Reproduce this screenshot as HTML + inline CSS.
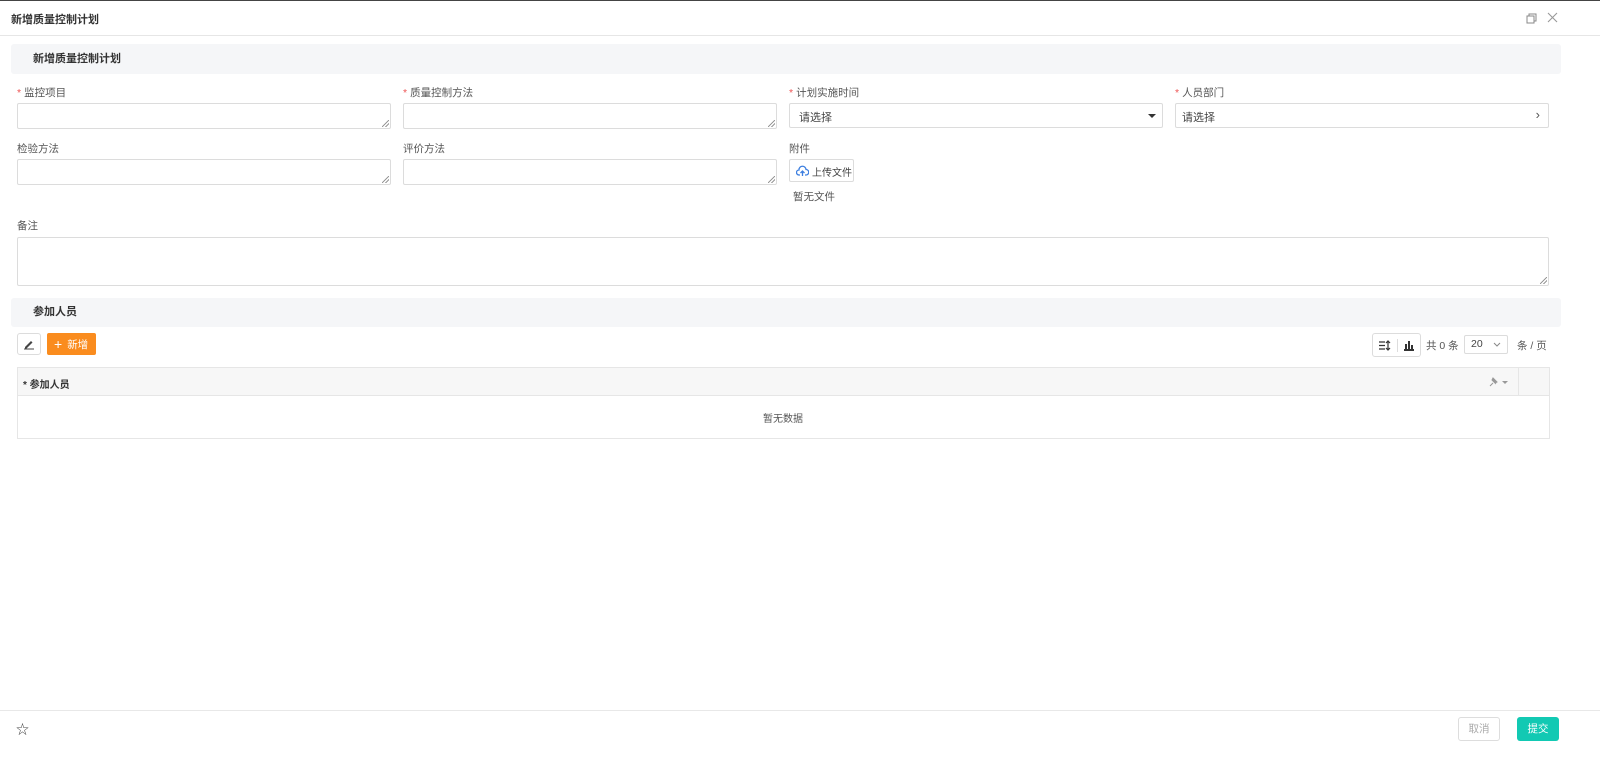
<!DOCTYPE html>
<html><head><meta charset="utf-8"><style>
*{box-sizing:border-box;margin:0;padding:0}
body{width:1600px;height:761px;background:#fff;font-family:"Liberation Sans","Noto Sans CJK SC",sans-serif;font-size:11px;color:#333;position:relative;overflow:hidden}
.a{position:absolute}
.bar{position:absolute;left:11px;width:1550px;background:#f5f6f8;border-radius:3px;font-weight:bold;font-size:11px;color:#333;padding-left:22px}
.lbl{position:absolute;font-size:10.5px;color:#555}
.lbl b{color:#e55;font-weight:normal;margin-right:3px}
.inp{position:absolute;border:1px solid #dcdcdc;border-radius:2px;background:#fff}
.rs{position:absolute;right:1px;bottom:1px;width:7px;height:7px;background:linear-gradient(135deg,transparent 45%,#999 45%,#999 55%,transparent 55%,transparent 70%,#999 70%,#999 80%,transparent 80%)}
</style></head><body>
<div class="a" style="left:0;top:0;width:1600px;height:1px;background:#444"></div>
<div class="a" style="left:11px;top:11px;font-size:11px;font-weight:bold;color:#333">新增质量控制计划</div>
<svg class="a" style="left:1526px;top:13px" width="11" height="11" viewBox="0 0 11 11"><rect x="1" y="3" width="7" height="7" fill="none" stroke="#888"/><path d="M3 3V1h7v7H8" fill="none" stroke="#888"/></svg>
<svg class="a" style="left:1547px;top:12px" width="11" height="11" viewBox="0 0 11 11"><path d="M1 1L10 10M10 1L1 10" stroke="#999" stroke-width="1.1"/></svg>
<div class="a" style="left:0;top:35px;width:1600px;height:1px;background:#e6e6e6"></div>
<div class="bar" style="top:44px;height:30px;line-height:30px">新增质量控制计划</div>

<div class="lbl" style="left:17px;top:85px"><b>*</b>监控项目</div>
<div class="inp" style="left:17px;top:103px;width:374px;height:26px"><div class="rs"></div></div>
<div class="lbl" style="left:403px;top:85px"><b>*</b>质量控制方法</div>
<div class="inp" style="left:403px;top:103px;width:374px;height:26px"><div class="rs"></div></div>
<div class="lbl" style="left:789px;top:85px"><b>*</b>计划实施时间</div>
<div class="inp" style="left:789px;top:103px;width:374px;height:25px;padding:5px 9px;color:#444">请选择<span class="a" style="right:6px;top:10px;border:4px solid transparent;border-top:4px solid #333;border-bottom:0"></span></div>
<div class="lbl" style="left:1175px;top:85px"><b>*</b>人员部门</div>
<div class="inp" style="left:1175px;top:103px;width:374px;height:25px;padding:5px 6px;color:#444">请选择<span class="a" style="right:8px;top:3px;font-size:13px;color:#555">›</span></div>

<div class="lbl" style="left:17px;top:141px">检验方法</div>
<div class="inp" style="left:17px;top:159px;width:374px;height:26px"><div class="rs"></div></div>
<div class="lbl" style="left:403px;top:141px">评价方法</div>
<div class="inp" style="left:403px;top:159px;width:374px;height:26px"><div class="rs"></div></div>
<div class="lbl" style="left:789px;top:141px">附件</div>
<div class="inp" style="left:789px;top:159px;width:65px;height:23px;padding:4px 0 0 22px;font-size:10px;color:#444">上传文件
<svg class="a" style="left:6px;top:5px" width="13" height="12" viewBox="0 0 13 12"><path d="M4 10H3A2.5 2.5 0 0 1 3 5 3.5 3.5 0 0 1 10 4.5 2.6 2.6 0 0 1 10 10H9" fill="none" stroke="#3d7fe0" stroke-width="1.3"/><path d="M6.5 11V6M4.5 8l2-2 2 2" fill="none" stroke="#3d7fe0" stroke-width="1.3"/></svg></div>
<div class="lbl" style="left:793px;top:189px;color:#555">暂无文件</div>

<div class="lbl" style="left:17px;top:218px">备注</div>
<div class="inp" style="left:17px;top:237px;width:1532px;height:49px"><div class="rs"></div></div>

<div class="bar" style="top:298px;height:29px;line-height:29px">参加人员</div>
<div class="inp" style="left:17px;top:333px;width:24px;height:22px;border-radius:3px"><svg class="a" style="left:5px;top:4px" width="12" height="12" viewBox="0 0 12 12"><path d="M2 9L8 3l1.5 1.5-6 6H2z" fill="#444"/><path d="M1 11h10" stroke="#444"/></svg></div>
<div class="a" style="left:47px;top:333px;width:49px;height:22px;background:#fa8c1e;border-radius:2px;color:#fff;font-size:10.5px;line-height:22px;padding-left:7px"><span style="font-size:14px;margin-right:5px;vertical-align:-1px">+</span>新增</div>

<div class="inp" style="left:1372px;top:333px;width:49px;height:24px;border-radius:3px">
<svg class="a" style="left:6px;top:6px" width="12" height="11" viewBox="0 0 12 11"><path d="M0 2h6M0 5.5h6M0 9h6M9 1v9M7 3l2-2 2 2M7 8l2 2 2-2" stroke="#333" fill="none" stroke-width="1.2"/></svg>
<div class="a" style="left:24px;top:5px;width:1px;height:13px;background:#ddd"></div>
<svg class="a" style="left:30px;top:5px" width="12" height="12" viewBox="0 0 12 12"><path d="M1 11h10M3 5v5M6 2v8M9 6v4" stroke="#333" stroke-width="2"/></svg></div>
<div class="a" style="left:1426px;top:338px;font-size:10.5px;color:#555">共 0 条</div>
<div class="inp" style="left:1464px;top:335px;width:44px;height:19px;padding:0 6px;line-height:17px;font-size:10.5px;color:#444">20<svg class="a" style="right:6px;top:6px" width="8" height="5" viewBox="0 0 8 5"><path d="M1 1l3 3 3-3" stroke="#888" fill="none"/></svg></div>
<div class="a" style="left:1517px;top:338px;font-size:10.5px;color:#555">条 / 页</div>

<div class="a" style="left:17px;top:367px;width:1533px;height:72px;border:1px solid #e6e6e6">
<div class="a" style="left:0;top:0;width:1531px;height:28px;background:#f7f7f7;border-bottom:1px solid #e6e6e6"></div>
<div class="a" style="left:1500px;top:0;width:1px;height:28px;background:#e6e6e6"></div>
<div class="a" style="left:5px;top:8px;font-size:10px;font-weight:bold;color:#333">* 参加人员</div>
<svg class="a" style="left:1470px;top:9px" width="22" height="10" viewBox="0 0 22 10"><path d="M2 9l3-3M4 3l4 4M5 1l4 4-2 1-3-3z" stroke="#999" fill="#999"/><path d="M14 4h6l-3 3z" fill="#999"/></svg>
<div class="a" style="left:745px;top:42px;font-size:10px;color:#555">暂无数据</div>
</div>

<div class="a" style="left:0;top:710px;width:1600px;height:1px;background:#e8e8e8"></div>
<div class="a" style="left:16px;top:719px;font-size:13px;color:#444">☆</div>
<div class="a" style="left:1458px;top:717px;width:42px;height:24px;border:1px solid #ddd;border-radius:3px;color:#aaa;font-size:10.5px;text-align:center;line-height:22px">取消</div>
<div class="a" style="left:1517px;top:717px;width:42px;height:24px;background:#12c9b3;border-radius:3px;color:#fff;font-size:10.5px;text-align:center;line-height:24px">提交</div>
</body></html>
